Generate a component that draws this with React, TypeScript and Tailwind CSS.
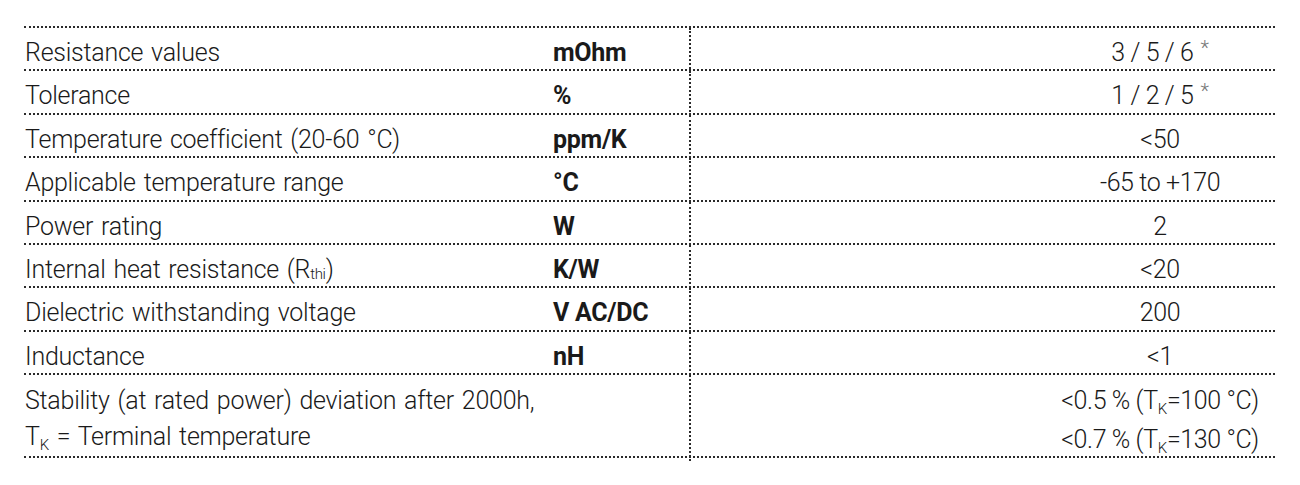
import React from "react";

type Row = {
  label: React.ReactNode;
  unit: string;
  value: React.ReactNode;
};

const Sub = ({ children }: { children: React.ReactNode }) => (
  <span className="text-[15px] relative top-[5px] tracking-[-0.3px]">{children}</span>
);

const Star = () => (
  <span className="text-[20px] text-[#777] relative top-[-6px] ml-[7px]">*</span>
);

const rows: Row[] = [
  { label: "Resistance values", unit: "mOhm", value: <>3 / 5 / 6<Star /></> },
  { label: "Tolerance", unit: "%", value: <>1 / 2 / 5<Star /></> },
  { label: "Temperature coefficient (20-60 °C)", unit: "ppm/K", value: <>&lt;50</> },
  { label: "Applicable temperature range", unit: "°C", value: "-65 to +170" },
  { label: "Power rating", unit: "W", value: "2" },
  {
    label: <>Internal heat resistance (R<Sub>thi</Sub>)</>,
    unit: "K/W",
    value: <>&lt;20</>,
  },
  { label: "Dielectric withstanding voltage", unit: "V AC/DC", value: "200" },
  { label: "Inductance", unit: "nH", value: <>&lt;1</> },
];

export default function App() {
  return (
    <div
      className="w-[1300px] h-[485px] bg-white text-[#1a1a1a]"
      style={{ fontFamily: "Roboto, 'Liberation Sans', sans-serif" }}
    >
      <div className="pt-[26px] pl-[24px]">
        <div className="w-[1251px] border-t-2 border-dotted border-[#2a2a2a]">
          {rows.map((r, i) => (
            <div
              key={i}
              className="grid grid-cols-[529px_138px_1fr] h-[43.4px] border-b-2 border-dotted border-[#2a2a2a]"
            >
              <div className="flex items-center pt-[6px] pl-[1px] text-[25px] font-light tracking-[-0.25px] [word-spacing:2px] whitespace-nowrap">
                {r.label}
              </div>
              <div className="flex items-center pt-[6px] text-[25px] font-bold tracking-[-0.3px] border-r-2 border-dotted border-[#2a2a2a] whitespace-nowrap">
                {r.unit}
              </div>
              <div className="flex items-center justify-end pt-[6px]">
                <div className="w-[230px] text-center text-[25px] font-light tracking-[-0.4px] whitespace-nowrap">
                  {r.value}
                </div>
              </div>
            </div>
          ))}
          <div className="grid grid-cols-[529px_138px_1fr] h-[83px] border-b-2 border-dotted border-[#2a2a2a]">
            <div className="pt-[8px] pl-[1px] text-[25px] leading-[36px] font-light tracking-[-0.25px] [word-spacing:2px] whitespace-nowrap">
              <div>Stability (at rated power) deviation after 2000h,</div>
              <div>
                T<Sub>K</Sub> = Terminal temperature
              </div>
            </div>
            <div className="border-r-2 border-dotted border-[#2a2a2a]" />
            <div className="flex justify-end pt-[8px]">
              <div className="w-[230px] text-center text-[25px] leading-[36px] font-light tracking-[-0.4px] whitespace-nowrap">
                <div>
                  &lt;0.5 % (T<Sub>K</Sub>=100 °C)
                </div>
                <div>
                  &lt;0.7 % (T<Sub>K</Sub>=130 °C)
                </div>
              </div>
            </div>
          </div>
        </div>
      </div>
    </div>
  );
}
